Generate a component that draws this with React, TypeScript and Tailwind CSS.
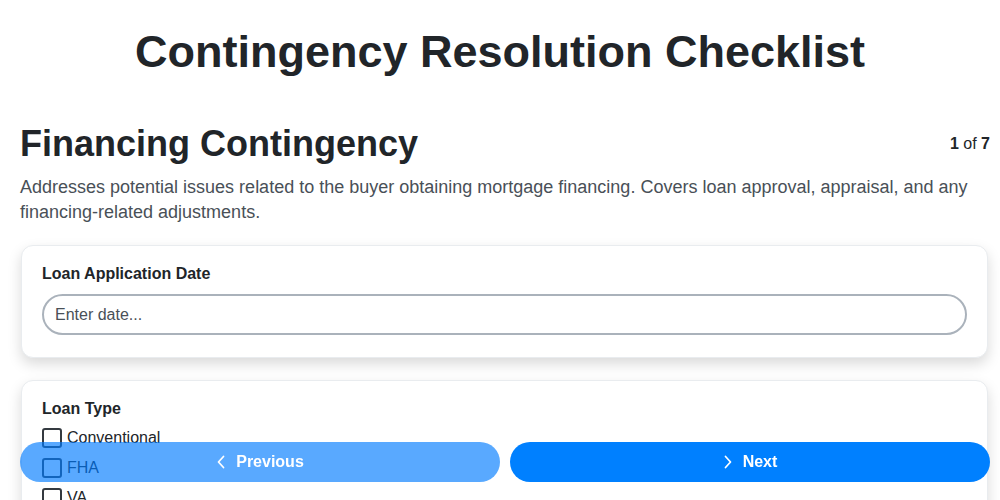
const loanTypes = ["Conventional", "FHA", "VA", "USDA", "Other"];

function Chevron({ dir }: { dir: "left" | "right" }) {
  return (
    <svg width="10" height="14" viewBox="0 0 10 14" fill="none" stroke="currentColor" strokeWidth="1.75" strokeLinecap="round" strokeLinejoin="round">
      <polyline points={dir === "left" ? "7.5,1.5 2.5,7 7.5,12.5" : "2.5,1.5 7.5,7 2.5,12.5"} />
    </svg>
  );
}

export default function App() {
  return (
    <main className="min-h-screen bg-white font-['Liberation_Sans',Arial,sans-serif] text-[#212529]">
      <div className="pl-5 pr-[10px] pb-24">
        <h1 className="pt-[24px] pr-[10px] text-center text-[45px] font-bold leading-[56px]">
          Contingency Resolution Checklist
        </h1>

        <div className="mt-[42px] flex items-center justify-between">
          <h2 className="text-[36px] font-bold leading-[44px]">Financing Contingency</h2>
          <p className="text-base">
            <span className="font-bold">1</span> of <span className="font-bold">7</span>
          </p>
        </div>
        <p className="mt-[9px] text-lg leading-[25px] text-[#495057]">
          Addresses potential issues related to the buyer obtaining mortgage financing. Covers loan approval,
          appraisal, and any financing-related adjustments.
        </p>

        <div className="mt-[20px] flex flex-col gap-[22px]">
          <section className="ml-px mr-[2px] rounded-xl border border-[#e9ecef] bg-white px-5 pt-[18px] pb-[22px] shadow-[0_6px_14px_rgba(0,0,0,0.15)]">
            <label className="block text-base font-bold leading-5">Loan Application Date</label>
            <input
              className="mt-[10px] h-[41px] w-full rounded-full border-2 border-[#aab2bb] px-[11px] text-base outline-none placeholder:text-[#495057]"
              placeholder="Enter date..."
            />
          </section>

          <section className="ml-px mr-[2px] rounded-xl border border-[#e9ecef] bg-white px-5 pt-[18px] pb-5 shadow-[0_6px_14px_rgba(0,0,0,0.15)]">
            <h3 className="text-base font-bold leading-5">Loan Type</h3>
            <div className="mt-[9px] flex flex-col gap-[10px]">
              {loanTypes.map((t) => (
                <label key={t} className="flex items-center gap-[5px] text-base leading-5">
                  <span className="h-5 w-5 rounded-[3px] border-2 border-[#343a40] bg-white" />
                  {t}
                </label>
              ))}
            </div>
          </section>
        </div>
      </div>

      <div className="fixed bottom-[18px] left-5 right-[10px] flex gap-[10px]">
        <button className="flex h-10 flex-1 items-center justify-center gap-[10px] rounded-full bg-[#007bff]/65 text-base font-bold text-white">
          <Chevron dir="left" />
          Previous
        </button>
        <button className="flex h-10 flex-1 items-center justify-center gap-[10px] rounded-full bg-[#0080ff] text-base font-bold text-white">
          <Chevron dir="right" />
          Next
        </button>
      </div>
    </main>
  );
}
